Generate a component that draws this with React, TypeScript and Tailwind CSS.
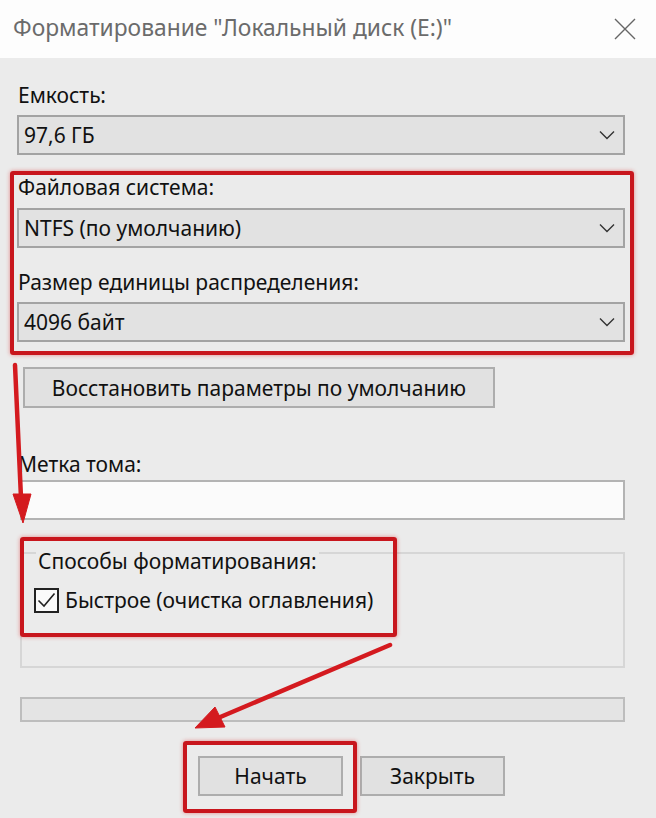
import React from 'react';

function Chevron() {
  return (
    <svg width="16" height="10" viewBox="0 0 16 10" className="shrink-0">
      <path d="M1 1.5 L8 8.5 L15 1.5" fill="none" stroke="#333" strokeWidth="1.4" />
    </svg>
  );
}

function Combo({ value }: { value: string }) {
  return (
    <div className="flex items-center justify-between h-[40px] border-2 border-[#a3a3a3] bg-[#e2e2e2] pl-[5px] pr-[8px]">
      <span className="text-[21px] leading-[28px] text-[#111]">{value}</span>
      <Chevron />
    </div>
  );
}

export default function App() {
  return (
    <div className="relative w-[656px] h-[818px] overflow-hidden bg-[#ebebeb] font-['Noto_Sans',sans-serif]">
      {/* title bar */}
      <div className="flex items-center justify-between h-[58px] bg-[#fdfdfd] pl-[13px] pr-[20px]">
        <span className="text-[22.8px] leading-[30px] text-[#6b6b6b] pb-[2px]">Форматирование "Локальный диск (E:)"</span>
        <svg width="22" height="22" viewBox="0 0 22 22">
          <path d="M1 1 L21 21 M21 1 L1 21" stroke="#666" strokeWidth="1.4" />
        </svg>
      </div>

      <div className="flex flex-col pl-[17px] pr-[31px]">
        <div className="mt-[23px] text-[21px] leading-[28px] text-[#111] pl-[1px]">Емкость:</div>
        <div className="mt-[6px]">
          <Combo value="97,6 ГБ" />
        </div>

        <div className="mt-[18px] text-[21px] leading-[28px] text-[#111] pl-[1px]">Файловая система:</div>
        <div className="mt-[7px]">
          <Combo value="NTFS (по умолчанию)" />
        </div>

        <div className="mt-[20px] text-[21px] leading-[28px] text-[#111] pl-[1px]">Размер единицы распределения:</div>
        <div className="mt-[6px]">
          <Combo value="4096 байт" />
        </div>

        <button className="mt-[25px] ml-[6px] w-[472px] h-[41px] border-2 border-[#adadad] bg-[#e1e1e1] text-[21px] leading-[28px] text-[#111]">
          Восстановить параметры по умолчанию
        </button>

        <div className="mt-[42px] text-[21px] leading-[28px] text-[#111] pl-[1px]">Метка тома:</div>
        <div className="mt-[2px] ml-[3px] h-[40px] border-2 border-[#b3b3b3] bg-[#fbfbfb]" />

        <fieldset className="mt-[13px] ml-[3px] h-[135px] border-2 border-[#d6d6d6] px-[14px]">
          <legend className="px-[2px] pt-[16px] text-[21px] leading-[24px] text-[#111]">Способы форматирования:</legend>
          <label className="flex items-center gap-[6px] mt-[13px] -ml-[2px]">
            <span className="flex items-center justify-center w-[25px] h-[25px] border-2 border-[#222] bg-[#fafafa]">
              <svg width="19" height="16" viewBox="0 0 19 16">
                <path d="M1.5 8.5 L7 14 L17.5 1.5" fill="none" stroke="#222" strokeWidth="1.6" />
              </svg>
            </span>
            <span className="text-[21px] leading-[28px] text-[#111]">Быстрое (очистка оглавления)</span>
          </label>
        </fieldset>

        <div className="mt-[29px] ml-[3px] h-[25px] border-2 border-[#bdbdbd] bg-[#e4e4e4]" />

        <div className="flex gap-[17px] mt-[34px] ml-[181px]">
          <button className="w-[145px] h-[40px] border-2 border-[#adadad] bg-[#e1e1e1] text-[21px] leading-[28px] text-[#111]">Начать</button>
          <button className="w-[145px] h-[40px] border-2 border-[#adadad] bg-[#e1e1e1] text-[21px] leading-[28px] text-[#111]">Закрыть</button>
        </div>
      </div>

      {/* annotations */}
      <div className="absolute left-[10px] top-[171px] w-[624px] h-[184px] rounded-[3px] border-[4px] border-[#c8161d] shadow-[0_0_4px_rgba(220,20,20,0.45)]" />
      <div className="absolute left-[20px] top-[537px] w-[377px] h-[100px] rounded-[3px] border-[4px] border-[#c8161d] shadow-[0_0_4px_rgba(220,20,20,0.45)]" />
      <div className="absolute left-[183px] top-[741px] w-[174px] h-[72px] rounded-[3px] border-[4px] border-[#c8161d] shadow-[0_0_4px_rgba(220,20,20,0.45)]" />
      <svg className="absolute inset-0 pointer-events-none" width="656" height="818" viewBox="0 0 656 818">
        <g fill="#d41a1f" stroke="#d41a1f">
          <path d="M15 365 L21 498" strokeWidth="4.5" strokeLinecap="round" fill="none" />
          <path d="M23 523 L13 494 L31 494 Z" strokeWidth="1" />
          <path d="M390 645 L218 718" strokeWidth="4.5" strokeLinecap="round" fill="none" />
          <path d="M195 728 L215 707 L225 727 Z" strokeWidth="1" />
        </g>
      </svg>
    </div>
  );
}
